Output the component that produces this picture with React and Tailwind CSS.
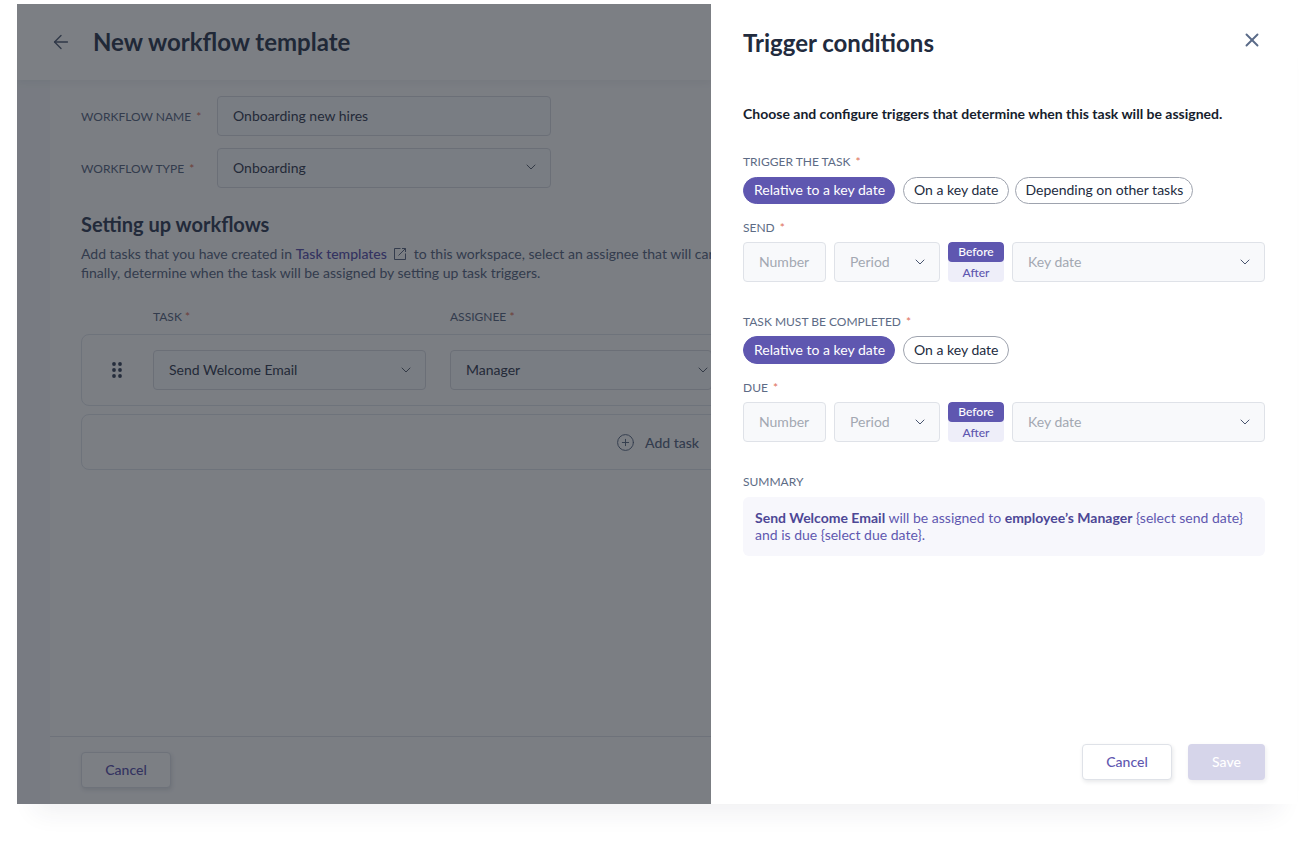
import React from "react";
import { ArrowLeft, X, ChevronDown, CirclePlus } from "lucide-react";

function Req({ className = "" }) {
  return <span className={"text-[#e0705a] " + className}>*</span>;
}

function Chev({ c = "text-[#5d6675]" }) {
  return <ChevronDown size={16} strokeWidth={1.5} className={c} />;
}

function LeftField({ label, value, select }) {
  return (
    <div className="flex items-center">
      <div className="w-[136px] pt-[2px] text-[12px] text-[#5d6b85] uppercase">
        {label} <Req className="ml-[2px]" />
      </div>
      <div className="w-[334px] h-[40px] rounded-[4px] border border-[#d9dce3] bg-[#f9fafc] flex items-center justify-between pl-[15px] pr-[11px] pb-[2px] text-[14px] text-[#3a4358]">
        <span>{value}</span>
        {select && <Chev />}
      </div>
    </div>
  );
}

function Pill({ children, active, tall }) {
  return (
    <span
      className={
        (tall ? "h-[28px] pb-[1px] " : "h-[27px] pb-[2px] ") +
        "pl-[10px] pr-[9px] rounded-full flex items-center text-[14px] border " +
        (active
          ? "bg-[#5f57b0] border-[#5f57b0] text-white"
          : "bg-white border-[#9ea3ae] text-[#222b3e]")
      }
    >
      {children}
    </span>
  );
}

function Box({ w, placeholder, select }) {
  return (
    <div
      className={
        w +
        " h-[40px] rounded-[4px] border border-[#dfe2e8] bg-[#f8f9fb] flex items-center justify-between pl-[15px] pr-[11px] pb-[2px] text-[14px] text-[#a3a8b2]"
      }
    >
      <span>{placeholder}</span>
      {select && <Chev c="text-[#4a5670] mt-[2px]" />}
    </div>
  );
}

function DateRow() {
  return (
    <div className="flex gap-[8px] items-center">
      <Box w="w-[83px]" placeholder="Number" />
      <Box w="w-[106px]" placeholder="Period" select />
      <div className="w-[56px] h-[40px] flex flex-col text-[12px] font-medium leading-[20px] text-center rounded-[4px] overflow-hidden bg-[#eeeef9]">
        <div className="bg-[#5f57b0] text-white rounded-[4px]">Before</div>
        <div className="text-[#5f57b0] pt-[1px]">After</div>
      </div>
      <Box w="w-[253px]" placeholder="Key date" select />
    </div>
  );
}

function Label({ children, className = "" }) {
  return (
    <div className={"text-[12px] leading-[16px] text-[#5d6b85] uppercase " + className}>
      {children}
    </div>
  );
}

function LeftPanel() {
  return (
    <div className="relative w-[694px] h-[800px] shrink-0 overflow-hidden bg-white flex flex-col">
      <header className="h-[76px] shrink-0 flex items-center pl-[33px] bg-white shadow-[0_2px_8px_rgba(20,30,50,0.06)] z-10">
        <ArrowLeft size={22} strokeWidth={1.5} className="text-[#56627a]" />
        <h1 className="ml-[21px] text-[24px] font-bold text-[#333e55]">New workflow template</h1>
      </header>
      <div className="flex flex-1 min-h-0">
        <div className="w-[33px] shrink-0 bg-[#f5f7fa] shadow-[1px_0_3px_rgba(20,30,50,0.05)]" />
        <main className="flex-1 min-w-0 flex flex-col bg-[#fcfcfd]">
          <div className="flex-1 pl-[31px] pt-[16px] overflow-hidden">
            <div className="flex flex-col gap-[12px]">
              <LeftField label="Workflow name" value="Onboarding new hires" />
              <LeftField label="Workflow type" value="Onboarding" select />
            </div>
            <h2 className="mt-[24px] text-[20px] leading-[24px] font-bold text-[#39445c]">Setting up workflows</h2>
            <p className="mt-[8px] text-[14px] leading-[19px] text-[#5d6b85] whitespace-nowrap">
              Add tasks that you have created in <span className="font-medium text-[#5f57b0]">Task templates</span>
              <svg width="14" height="14" viewBox="0 0 14 14" fill="none" stroke="currentColor" strokeWidth="1" className="inline ml-[6px] mr-[7px] -mt-[3px] text-[#5f6a85]">
                <path d="M7.5 1.5H1.5V12.5H12.5V6.5" />
                <path d="M5.5 8.5L12.5 1.5M9 1.5H12.5V5" />
              </svg>
              to this workspace, select an assignee that will carry it out, and
              <br />
              finally, determine when the task will be assigned by setting up task triggers.
            </p>
            <div className="mt-[27px] flex text-[12px] leading-[16px] text-[#5d6b85] uppercase">
              <div className="w-[72px]" />
              <div className="w-[297px]">Task <Req /></div>
              <div>Assignee <Req /></div>
            </div>
            <div className="mt-[9px] w-[700px] h-[72px] rounded-[8px] border border-[#e1e4ea] flex items-center">
              <div className="w-[71px] pr-[1px] flex justify-center">
                <svg width="10" height="16" viewBox="0 0 10 16" className="text-[#3f4a61] fill-current">
                  <circle cx="2" cy="2" r="1.9" />
                  <circle cx="8" cy="2" r="1.9" />
                  <circle cx="2" cy="8" r="1.9" />
                  <circle cx="8" cy="8" r="1.9" />
                  <circle cx="2" cy="14" r="1.9" />
                  <circle cx="8" cy="14" r="1.9" />
                </svg>
              </div>
              <div className="w-[273px] h-[40px] rounded-[4px] border border-[#d9dce3] bg-[#f9fafc] flex items-center justify-between pl-[15px] pr-[11px] text-[14px] text-[#3a4358]">
                <span className="-mt-[1px]">Send Welcome Email</span>
                <Chev />
              </div>
              <div className="ml-[24px] w-[262px] h-[40px] rounded-[4px] border border-[#d9dce3] bg-[#f9fafc] flex items-center justify-between pl-[15px] text-[14px] text-[#3a4358] shrink-0">
                <span className="-mt-[1px]">Manager</span>
                <Chev />
              </div>
            </div>
            <div className="mt-[8px] w-[700px] h-[56px] rounded-[8px] border border-[#e1e4ea] flex items-center pl-[534px] text-[14px] font-medium text-[#5d6b85]">
              <CirclePlus size={19} strokeWidth={1.2} className="mr-[10px]" />
              Add task
            </div>
          </div>
          <footer className="h-[68px] shrink-0 border-t border-[#dfe2e8] pl-[31px] pt-[15px]">
            <div className="w-[90px] h-[36px] rounded-[4px] border border-[#dfe2e8] bg-white shadow-[1px_2px_4px_rgba(20,30,50,0.12)] flex items-center justify-center pb-[1px] text-[14px] font-medium text-[#5f57b0]">
              Cancel
            </div>
          </footer>
        </main>
      </div>
      <div className="absolute inset-0 z-20 bg-[#10151f]/55" />
    </div>
  );
}

function RightPanel() {
  return (
    <div className="w-[586px] h-[800px] shrink-0 bg-white pl-[32px] pr-[32px] flex flex-col">
      <div className="h-[80px] shrink-0 flex items-start justify-between pt-[24px]">
        <h2 className="text-[24px] leading-[30px] font-bold text-[#222b3e]">Trigger conditions</h2>
        <X size={22} strokeWidth={2.1} className="text-[#5a6b88] mt-[1px] mr-[2px]" />
      </div>
      <p className="mt-[21px] text-[14px] leading-[18px] font-bold text-[#161d2d]">
        Choose and configure triggers that determine when this task will be assigned.
      </p>
      <Label className="mt-[31px]">
        Trigger the task <Req className="ml-[2px]" />
      </Label>
      <div className="mt-[7px] flex gap-[8px]">
        <Pill active>Relative to a key date</Pill>
        <Pill>On a key date</Pill>
        <div className="-ml-[2px]">
          <Pill>Depending on other tasks</Pill>
        </div>
      </div>
      <Label className="mt-[16px]">
        Send <Req className="ml-[2px]" />
      </Label>
      <div className="mt-[6px]">
        <DateRow />
      </div>
      <Label className="mt-[32px]">
        Task must be completed <Req className="ml-[2px]" />
      </Label>
      <div className="mt-[6px] flex gap-[8px]">
        <Pill active tall>Relative to a key date</Pill>
        <Pill tall>On a key date</Pill>
      </div>
      <Label className="mt-[16px]">
        Due <Req className="ml-[2px]" />
      </Label>
      <div className="mt-[6px]">
        <DateRow />
      </div>
      <Label className="mt-[32px]">Summary</Label>
      <div className="mt-[7px] w-[522px] h-[59px] rounded-[6px] bg-[#f7f7fc] px-[12px] pt-[12px] text-[14px] leading-[17px] text-[#5f57b0]">
        <b className="font-bold text-[#4d4796]">Send Welcome Email</b> will be assigned to{" "}
        <b className="font-bold text-[#4d4796]">employee’s Manager</b> {"{select send date}"}
        <br />
        and is due {"{select due date}"}.
      </div>
      <div className="mt-auto mb-[24px] flex justify-end gap-[16px]">
        <div className="w-[90px] h-[36px] rounded-[4px] border border-[#dfe2e8] bg-white shadow-[1px_2px_4px_rgba(20,30,50,0.1)] flex items-center justify-center pb-[1px] text-[14px] font-medium text-[#5f57b0]">
          Cancel
        </div>
        <div className="w-[77px] h-[36px] rounded-[4px] bg-[#d6d5ea] shadow-[1px_2px_4px_rgba(20,30,50,0.08)] flex items-center justify-center pb-[1px] text-[14px] font-medium text-white">
          Save
        </div>
      </div>
    </div>
  );
}

export default function App() {
  return (
    <div className="w-[1316px] h-[855px] bg-white pl-[17px] pt-[4px] overflow-hidden font-['Lato',sans-serif]">
      <div className="w-[1280px] h-[800px] flex shadow-[0_26px_24px_-18px_rgba(40,40,70,0.07)]">
        <LeftPanel />
        <RightPanel />
      </div>
    </div>
  );
}
